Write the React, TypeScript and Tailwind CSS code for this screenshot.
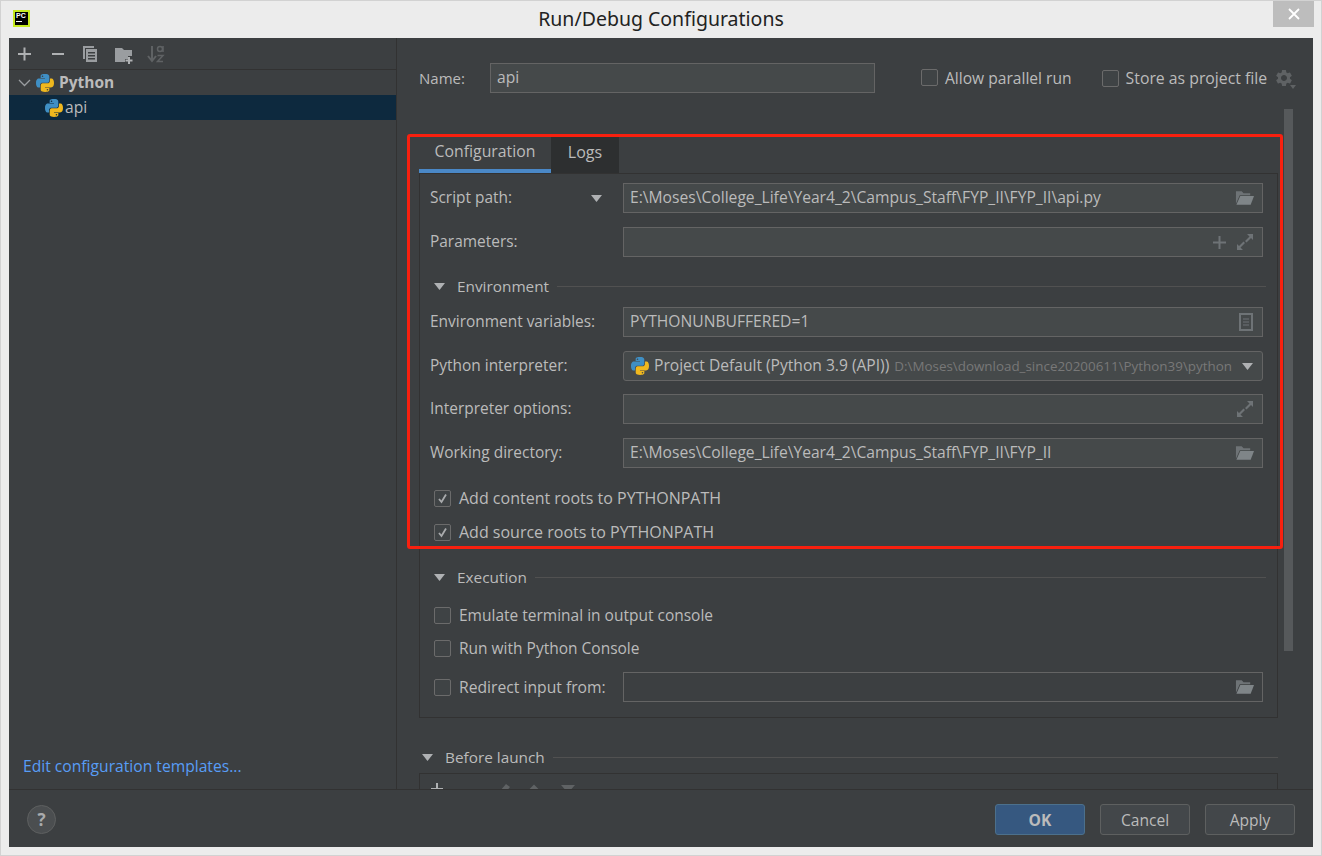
import React from 'react';
import { MdSettings } from 'react-icons/md';

const PythonIcon = ({ size = 18 }: { size?: number }) => (
    <svg width={size} height={size} viewBox="0 0 24 24" className="shrink-0">
        <path fill="#3f8fc4" fillRule="evenodd" d="M11.9 0C5.8 0 6.2 2.6 6.2 2.6v2.7h5.8v.8H3.9S0 5.7 0 11.9s3.4 6 3.4 6h2v-2.9s-.1-3.4 3.3-3.4h5.8s3.2.1 3.2-3.1V3.2S18.2 0 11.9 0zM8.7 1.9a1 1 0 1 1 0 2.1 1 1 0 0 1 0-2.1z" />
        <path fill="#f0b81e" fillRule="evenodd" d="M12.1 24c6.1 0 5.7-2.6 5.7-2.6v-2.7H12v-.8h8.1s3.9.4 3.9-5.8-3.4-6-3.4-6h-2v2.9s.1 3.4-3.3 3.4H9.5s-3.2-.1-3.2 3.1v5.3S5.8 24 12.1 24zm3.2-1.9a1 1 0 1 1 0-2.1 1 1 0 0 1 0 2.1z" />
    </svg>
);

const FolderIcon = () => (
    <svg width="19" height="16" viewBox="0 0 20 16" className="shrink-0">
        <path fill="#6e7376" d="M1 1h6l2 2h7v2H5L1 14z" />
        <path fill="#7f8588" d="M5.500 6H20l-3.500 9H1.500z" />
    </svg>
);

const ExpandIcon = () => (
    <svg width="16" height="16" viewBox="0 0 16 16" fill="none" className="shrink-0 mr-[1px]">
        <path d="M10 0h6v6l-2-2-4.500 4.500L8 7l4.500-4.500zM0 16v-6l2 2 4.500-4.500L8 9l-4.500 4.500L6 16z" fill="#6e7376" />
    </svg>
);

const Triangle = ({ className = '' }: { className?: string }) => (
    <svg width="11" height="7" viewBox="0 0 11 7" className={`shrink-0 ${className}`}>
        <path d="M0 0h11L5.500 7z" fill="#afb1b3" />
    </svg>
);

const Field = ({ value, icon, bare }: { value?: string; icon?: React.ReactNode; bare?: boolean }) => (
    <div className={`flex-1 h-[30px] flex items-center justify-between pl-[6px] pr-[8px] border border-[#646464] ${bare ? 'bg-[#3c3f41]' : 'bg-[#45494a]'}`}>
        <span className="text-[#bbbbbb] text-[15.65px] whitespace-nowrap">{value}</span>
        <div className="flex items-center gap-[11px]">{icon}</div>
    </div>
);

const Row = ({ label, className = '', children }: { label: string; className?: string; children: React.ReactNode }) => (
    <div className={`flex items-center ${className}`}>
        <span className="w-[193px] shrink-0 text-[#bbbbbb] text-[15.45px]">{label}</span>
        {children}
    </div>
);

const Check = ({ checked }: { checked?: boolean }) => (
    <div className="w-[17px] h-[17px] shrink-0 rounded-[2px] border border-[#6b6b6b] bg-[#3f4345] flex items-center justify-center">
        {checked && (
            <svg width="11" height="11" viewBox="0 0 11 11" fill="none">
                <path d="M2 6l2.500 3L9 1.500" stroke="#a9abad" strokeWidth="1.800" />
            </svg>
        )}
    </div>
);

const CheckRow = ({ label, checked, className = '' }: { label: string; checked?: boolean; className?: string }) => (
    <div className={`h-[20px] flex items-center gap-[8px] pl-[4px] ${className}`}>
        <Check checked={checked} />
        <span className="text-[#bbbbbb] whitespace-nowrap">{label}</span>
    </div>
);

const Section = ({ title, className = '' }: { title: string; className?: string }) => (
    <div className={`h-[20px] flex items-center ${className}`}>
        <Triangle />
        <span className="ml-[12px] mr-[8px] text-[#bbbbbb] text-[15.35px] whitespace-nowrap">{title}</span>
        <div className="flex-1 h-px bg-[#515151]" />
    </div>
);

const Button = ({ label, primary }: { label: string; primary?: boolean }) => (
    <button className={`w-[90px] h-[31px] rounded-[3px] border pt-[2px] ${primary ? 'bg-[#365880] border-[#4c708c] text-[#bbbbbb] font-bold' : 'bg-[#43474a] border-[#5e6060] text-[#bbbbbb]'}`}>
        {label}
    </button>
);

export default function App() {
    return (
        <div className="relative w-[1322px] h-[856px] flex flex-col overflow-hidden bg-[#ececec] border border-[#d2d2d2] font-['Open_Sans',sans-serif] text-[15.6px]">
            {/* title bar */}
            <div className="h-[37px] shrink-0 grid grid-cols-[1fr_auto_1fr]">
                <div className="pl-[12px] pt-[9px]">
                    <div className="w-[17px] h-[17px] bg-black border-[2px] border-[#c6ea20] flex flex-col">
                        <span className="text-[7px] leading-[8px] font-bold text-white font-['Liberation_Sans',sans-serif] pl-[1px]">PC</span>
                        <div className="w-[6px] h-px bg-white ml-[1px] mt-[1px]" />
                    </div>
                </div>
                <div className="pt-[4px] text-[19.5px] leading-[28px] text-[#222222] font-['Noto_Sans',sans-serif]">Run/Debug Configurations</div>
                <div className="flex justify-end pr-[7px]">
                    <div className="w-[41px] h-[26px] bg-[#bdbdbd] flex items-center justify-center">
                        <svg width="12" height="12" viewBox="0 0 12 12" fill="none">
                            <path d="M1 1l10 10M11 1L1 11" stroke="#fff" strokeWidth="1.800" />
                        </svg>
                    </div>
                </div>
            </div>

            <div className="mx-[8px] mb-[8px] flex-1 flex flex-col bg-[#3c3f41] min-h-0">
                <div className="flex-1 flex min-h-0">
                    {/* left tree */}
                    <div className="w-[388px] shrink-0 flex flex-col border-r border-[#323232]">
                        <div className="h-[32px] shrink-0 border-b border-[#323232] flex items-center pl-[9px]">
                            <svg width="155" height="20" viewBox="0 0 155 20" fill="none">
                                <path d="M0 10h13M6.500 3.500v13M34 10h12" stroke="#afb1b3" strokeWidth="2" />
                                <path d="M65 2h11v2H67v11h-2z" fill="#9a9da0" />
                                <path fillRule="evenodd" d="M68 5h11v13H68zM70 8v1.500h7V8zm0 3v1.500h7V11zm0 3v1.500h7V14z" fill="#9a9da0" />
                                <path d="M97 4h7l2 2h8v6h-4v3h-3v3H97z" fill="#9a9da0" />
                                <path d="M111 13v7M107.500 16.500h7" stroke="#afb1b3" strokeWidth="2" />
                                <path d="M134 2v14M130 12l4 5 4-5" stroke="#5f6264" strokeWidth="2" />
                                <circle cx="142" cy="5" r="2.500" stroke="#5f6264" strokeWidth="1.500" />
                                <path d="M145 2v6M139.500 11.500h5.500l-5.500 6h5.500" stroke="#5f6264" strokeWidth="1.500" />
                            </svg>
                        </div>
                        <div className="h-[25px] flex items-center pl-[9px] gap-[5px]">
                            <svg width="13" height="8" viewBox="0 0 13 8" fill="none">
                                <path d="M1 1l5.500 5.500L12 1" stroke="#9a9da0" strokeWidth="1.300" />
                            </svg>
                            <PythonIcon />
                            <span className="font-bold text-[#bbbbbb] text-[15.5px]">Python</span>
                        </div>
                        <div className="h-[25px] flex items-center pl-[36px] gap-[2px] bg-[#0d293e]">
                            <PythonIcon />
                            <span className="text-[#bbbbbb]">api</span>
                        </div>
                        <div className="mt-auto pl-[14px] pb-[11px] text-[#589df6] text-[15.65px]">Edit configuration templates...</div>
                    </div>

                    {/* right form */}
                    <div className="relative flex-1 min-w-0 overflow-hidden pt-[25px] pl-[22px] pr-[35px]">
                        <div className="flex items-center whitespace-nowrap">
                            <span className="w-[71px] shrink-0 text-[#bbbbbb] text-[15px]">Name:</span>
                            <div className="w-[385px] shrink-0 flex">
                                <Field value="api" />
                            </div>
                            <div className="ml-[46px] flex items-center gap-[7px]">
                                <Check />
                                <span className="text-[#bbbbbb] pt-[1px]">Allow parallel run</span>
                            </div>
                            <div className="ml-[30px] flex items-center gap-[7px]">
                                <Check />
                                <span className="text-[#bbbbbb] text-[15.8px] pt-[1px]">Store as project file</span>
                            </div>
                            <div className="relative ml-[7px] shrink-0">
                                <MdSettings size={20} color="#5f6264" />
                                <svg width="6" height="4" viewBox="0 0 6 4" className="absolute right-[-2px] bottom-[-1px]">
                                    <path d="M0 0h6L3 4z" fill="#5f6264" />
                                </svg>
                            </div>
                        </div>

                        {/* tabs */}
                        <div className="mt-[44px] flex h-[36px]">
                            <div className="w-[132px] flex justify-center pt-[3px] border-b-[4px] border-[#4a88c7] text-[#bbbbbb] text-[15.8px]">Configuration</div>
                            <div className="w-[68px] flex justify-center pt-[3px] bg-[#2d2f30] text-[#bbbbbb] text-[16px]">Logs</div>
                        </div>
                        <div className="border border-[#323232] pt-[9px] pl-[10px] pr-[14px] pb-[15px]">
                            <Row label="Script path:" className="relative">
                                <Field value="E:\Moses\College_Life\Year4_2\Campus_Staff\FYP_II\FYP_II\api.py" icon={<FolderIcon />} />
                                <Triangle className="absolute left-[161px] top-[12px]" />
                            </Row>
                            <Row label="Parameters:" className="mt-[14px]">
                                <Field icon={<>
                                    <svg width="13" height="13" viewBox="0 0 13 13" fill="none"><path d="M6.500 0v13M0 6.500h13" stroke="#6e7376" strokeWidth="2" /></svg>
                                    <ExpandIcon />
                                </>} />
                            </Row>
                            <Section title="Environment" className="mt-[19px] ml-[4px] -mr-[3px]" />
                            <Row label="Environment variables:" className="mt-[11px]">
                                <Field value="PYTHONUNBUFFERED=1" icon={
                                    <svg width="14" height="18" viewBox="0 0 14 18" fill="none" className="mr-[1px]">
                                        <rect x="1" y="1" width="12" height="16" stroke="#6e7376" strokeWidth="2" />
                                        <path d="M4 6h6M4 9h6M4 12h6" stroke="#6e7376" />
                                    </svg>
                                } />
                            </Row>
                            <Row label="Python interpreter:" className="mt-[14px]">
                                <div className="flex-1 h-[30px] flex items-center pl-[7px] pr-[9px] border border-[#646464] rounded-[3px] bg-[#45494a] whitespace-nowrap overflow-hidden">
                                    <PythonIcon />
                                    <span className="ml-[5px] text-[#bbbbbb]">Project Default (Python 3.9 (API))</span>
                                    <span className="ml-[5px] flex-1 overflow-hidden text-[13.4px] text-[#787878]">D:\Moses\download_since20200611\Python39\python</span>
                                    <Triangle className="ml-[2px]" />
                                </div>
                            </Row>
                            <Row label="Interpreter options:" className="mt-[13px]">
                                <Field icon={<ExpandIcon />} />
                            </Row>
                            <Row label="Working directory:" className="mt-[14px]">
                                <Field value="E:\Moses\College_Life\Year4_2\Campus_Staff\FYP_II\FYP_II" icon={<FolderIcon />} />
                            </Row>
                            <CheckRow label="Add content roots to PYTHONPATH" checked className="mt-[20px] text-[16px]" />
                            <CheckRow label="Add source roots to PYTHONPATH" checked className="mt-[14px] text-[16px]" />
                            <Section title="Execution" className="mt-[25px] ml-[4px] -mr-[3px]" />
                            <CheckRow label="Emulate terminal in output console" className="mt-[18px] text-[15.5px] leading-[22px]" />
                            <CheckRow label="Run with Python Console" className="mt-[13px] text-[15.5px] leading-[22px]" />
                            <div className="mt-[14px] flex items-center pl-[4px]">
                                <Check />
                                <span className="ml-[8px] w-[164px] shrink-0 text-[#bbbbbb] text-[15.7px] pt-[1px]">Redirect input from:</span>
                                <Field bare icon={<FolderIcon />} />
                            </div>
                        </div>
                        <Section title="Before launch" className="mt-[29px] ml-[3px]" />
                        <div className="mt-[6px] h-[60px] border border-[#323232] pt-[8px] pl-[11px]">
                            <svg width="150" height="14" viewBox="0 0 150 14" fill="none">
                                <path d="M6 1v12M0 7h12" stroke="#afb1b3" strokeWidth="2" />
                                <path d="M69 9l6-7 4 3-6 7z" fill="#5f6264" />
                                <path d="M103 4v10M99 8l4-4 4 4" stroke="#5f6264" strokeWidth="2" />
                                <path d="M130 3h14l-7 8z" fill="#5f6264" />
                            </svg>
                        </div>

                        {/* scrollbar */}
                        <div className="absolute left-[887px] top-[71px] w-[9px] h-[542px] bg-[#56595b]" />
                    </div>
                </div>

                {/* footer */}
                <div className="h-[58px] shrink-0 border-t border-[#323232] flex items-center justify-between pt-[2px] pl-[18px] pr-[18px]">
                    <div className="w-[29px] h-[29px] rounded-full bg-[#4b4e50] border border-[#5e6060] flex items-center justify-center font-bold text-[17px] text-[#a9abad]">?</div>
                    <div className="flex gap-[15px]">
                        <Button label="OK" primary />
                        <Button label="Cancel" />
                        <Button label="Apply" />
                    </div>
                </div>
            </div>

            {/* red annotation box */}
            <div className="absolute left-[406px] top-[133px] w-[876px] h-[415px] border-[3px] border-[#f8200f] rounded-[3px] pointer-events-none" />
        </div>
    );
}
